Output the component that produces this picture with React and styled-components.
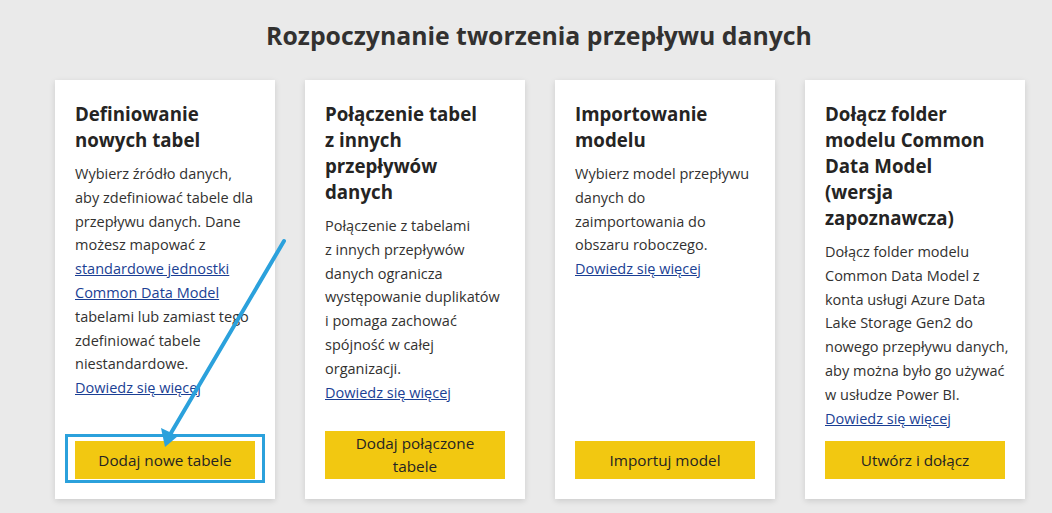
import React from 'react'
import styled, { createGlobalStyle } from 'styled-components'

const GlobalStyle = createGlobalStyle`
  html, body {
    margin: 0;
    padding: 0;
    background: #eaeaea;
  }
  body {
    font-family: "Open Sans", "Noto Sans", "Liberation Sans", sans-serif;
    color: #323130;
  }
`

const Page = styled.div`
  position: relative;
  width: 1052px;
  height: 513px;
  overflow: hidden;
`

const Title = styled.h1`
  margin: 0;
  padding: 17px 0 0 26px;
  height: 80px;
  box-sizing: border-box;
  text-align: center;
  font-size: 24.8px;
  line-height: 36px;
  font-weight: 700;
  color: #323130;
`

const Cards = styled.div`
  display: flex;
  gap: 30px;
  padding-left: 55px;
`

const Card = styled.div`
  width: 220px;
  height: 419px;
  box-sizing: border-box;
  padding: 20px;
  background: #fff;
  box-shadow: 0 2px 6px rgba(0, 0, 0, 0.13);
  display: flex;
  flex-direction: column;
`

const CardTitle = styled.h2`
  margin: 1px 0 9px;
  font-size: 18.7px;
  line-height: 26px;
  font-weight: 700;
  color: #252423;
  white-space: nowrap;
`

const Body = styled.p`
  margin: 0;
  font-size: 14.5px;
  line-height: 23.8px;
  color: #323130;
  white-space: nowrap;
`

const Link = styled.a`
  color: #1b3f94;
  text-decoration: underline;
  cursor: pointer;
`

const Footer = styled.div`
  margin-top: auto;
  position: relative;
`

const Button = styled.button`
  width: 180px;
  min-height: 38px;
  padding: 1px 8px;
  border: none;
  background: #f2c811;
  color: #252423;
  font-family: inherit;
  font-size: 15.3px;
  line-height: 23px;
  display: flex;
  align-items: center;
  justify-content: center;
  text-align: center;
  cursor: pointer;
`

const Highlight = styled.div`
  position: absolute;
  left: -10px;
  right: -10px;
  top: -7px;
  bottom: -4px;
  border: 3px solid #2ba1dc;
  pointer-events: none;
`

const Overlay = styled.svg`
  position: absolute;
  left: 0;
  top: 0;
  pointer-events: none;
`

const cards = [
  {
    title: ['Definiowanie', 'nowych tabel'],
    body: (
      <>
        Wybierz źródło danych,
        <br />
        aby zdefiniować tabele dla
        <br />
        przepływu danych. Dane
        <br />
        możesz mapować z
        <br />
        <Link>standardowe jednostki</Link>
        <br />
        <Link>Common Data Model</Link>
        <br />
        tabelami lub zamiast tego
        <br />
        zdefiniować tabele
        <br />
        niestandardowe.
        <br />
        <Link>Dowiedz się więcej</Link>
      </>
    ),
    button: ['Dodaj nowe tabele'],
    highlighted: true,
  },
  {
    title: ['Połączenie tabel', 'z innych', 'przepływów', 'danych'],
    body: (
      <>
        Połączenie z tabelami
        <br />
        z innych przepływów
        <br />
        danych ogranicza
        <br />
        występowanie duplikatów
        <br />
        i pomaga zachować
        <br />
        spójność w całej
        <br />
        organizacji.
        <br />
        <Link>Dowiedz się więcej</Link>
      </>
    ),
    button: ['Dodaj połączone', 'tabele'],
  },
  {
    title: ['Importowanie', 'modelu'],
    body: (
      <>
        Wybierz model przepływu
        <br />
        danych do
        <br />
        zaimportowania do
        <br />
        obszaru roboczego.
        <br />
        <Link>Dowiedz się więcej</Link>
      </>
    ),
    button: ['Importuj model'],
  },
  {
    title: ['Dołącz folder', 'modelu Common', 'Data Model', '(wersja', 'zapoznawcza)'],
    body: (
      <>
        Dołącz folder modelu
        <br />
        Common Data Model z
        <br />
        konta usługi Azure Data
        <br />
        Lake Storage Gen2 do
        <br />
        nowego przepływu danych,
        <br />
        aby można było go używać
        <br />
        w usłudze Power BI.
        <br />
        <Link>Dowiedz się więcej</Link>
      </>
    ),
    button: ['Utwórz i dołącz'],
  },
]

const lines = (parts) =>
  parts.map((p, i) => (
    <React.Fragment key={i}>
      {i > 0 && <br />}
      {p}
    </React.Fragment>
  ))

export default function App() {
  return (
    <Page>
      <GlobalStyle />
      <Title>Rozpoczynanie tworzenia przepływu danych</Title>
      <Cards>
        {cards.map((c, i) => (
          <Card key={i}>
            <CardTitle>{lines(c.title)}</CardTitle>
            <Body>{c.body}</Body>
            <Footer>
              <Button>
                <span>{lines(c.button)}</span>
              </Button>
              {c.highlighted && <Highlight />}
            </Footer>
          </Card>
        ))}
      </Cards>
      <Overlay width="1052" height="513" viewBox="0 0 1052 513">
        <line
          x1="284"
          y1="241"
          x2="171"
          y2="433"
          stroke="#2ba1dc"
          strokeWidth="4"
          strokeLinecap="round"
        />
        <polygon points="165,447 161,428 178,436" fill="#2ba1dc" />
      </Overlay>
    </Page>
  )
}
